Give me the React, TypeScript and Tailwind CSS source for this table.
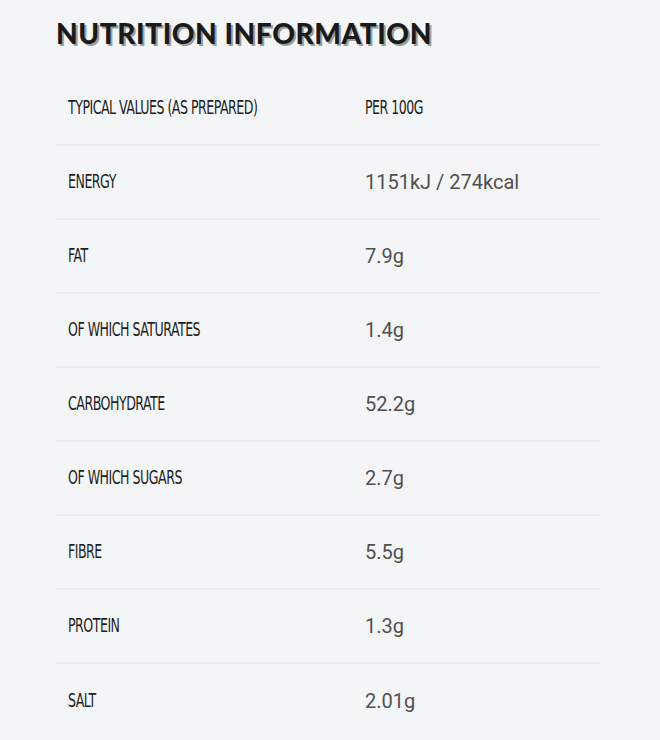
import React from "react";

const rows: [string, string][] = [
  ["Energy", "1151kJ / 274kcal"],
  ["Fat", "7.9g"],
  ["of which saturates", "1.4g"],
  ["Carbohydrate", "52.2g"],
  ["of which sugars", "2.7g"],
  ["Fibre", "5.5g"],
  ["Protein", "1.3g"],
  ["Salt", "2.01g"],
];

const hand = "font-['DejaVu_Sans_Condensed','Liberation_Sans_Narrow',sans-serif]";

function Label({ children }: { children: React.ReactNode }) {
  return (
    <span
      className={`${hand} inline-block origin-left scale-y-[1.35] text-[14px] uppercase tracking-[-0.5px] text-[#1e1e1e]`}
    >
      {children}
    </span>
  );
}

export default function App() {
  return (
    <div className="min-h-[740px] w-full bg-[#f4f5f7] pl-[56px] pr-[60px]">
      <h1 className="pt-[17px] font-['Lato',sans-serif] text-[28px] leading-[32px] font-black tracking-[0.6px] text-[#1a1a1a] [text-shadow:2px_2px_0_#9c9c9c]">
        NUTRITION INFORMATION
      </h1>
      <div className="mt-[23px] w-[544px]">
        <div className="grid h-[74px] grid-cols-[297px_1fr] items-center border-b-2 border-[#ececef] pb-[4px]">
          <div className="px-3">
            <Label>Typical values (as prepared)</Label>
          </div>
          <div className="px-3">
            <Label>Per 100g</Label>
          </div>
        </div>
        {rows.map(([k, v], i) => (
          <div
            key={k}
            className={`grid h-[74px] grid-cols-[297px_1fr] items-center pb-[4px] ${
              i < rows.length - 1 ? "border-b-2 border-[#ececef]" : ""
            }`}
          >
            <div className="px-3">
              <Label>{k}</Label>
            </div>
            <div className="px-3 pt-[3px] font-['Roboto',sans-serif] text-[20px] text-[#505050]">{v}</div>
          </div>
        ))}
      </div>
    </div>
  );
}
